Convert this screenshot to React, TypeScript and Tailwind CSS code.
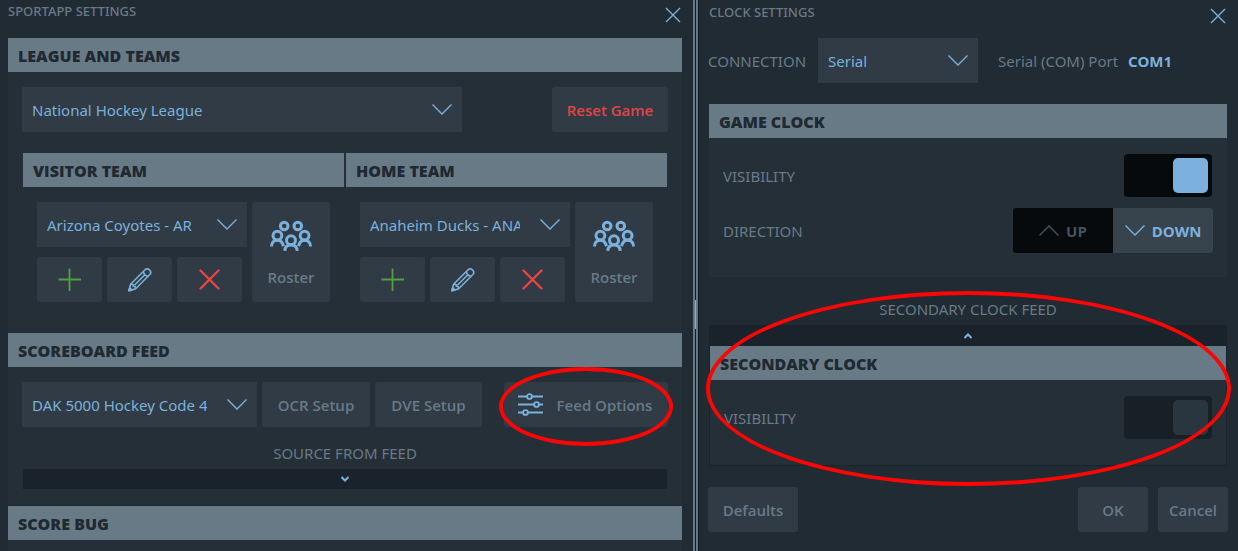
import { useState, type ReactNode } from 'react'

function ChevronIcon({ up, className = '' }: { up?: boolean; className?: string }) {
  return (
    <svg viewBox="0 0 20 11" className={`w-5 h-[11px] shrink-0 ${className}`} fill="none" stroke="currentColor" strokeWidth="1.4">
      <path d={up ? 'M0.5 10.5 L10 1 L19.5 10.5' : 'M0.5 0.5 L10 10 L19.5 0.5'} />
    </svg>
  )
}

function SmallChevron({ up }: { up?: boolean }) {
  return (
    <svg viewBox="0 0 8 6" className="w-2 h-[6px]" fill="none" stroke="#7bb1dc" strokeWidth="2">
      <path d={up ? 'M0.5 5 L4 1.5 L7.5 5' : 'M0.5 1 L4 4.5 L7.5 1'} />
    </svg>
  )
}

function PlusIcon() {
  return (
    <svg viewBox="0 0 24 24" className="w-6 h-6" stroke="#52a13f" strokeWidth="1.8">
      <path d="M11.5 0.5 V23 M0.5 11.5 H23" />
    </svg>
  )
}

function PencilIcon() {
  return (
    <svg viewBox="0 0 24 24" className="w-6 h-6" fill="none" stroke="#7bb1dc" strokeWidth="1.6" strokeLinejoin="round">
      <path d="M0.9 22.6 L2.6 16.2 L16.8 2 C18.2 0.6 20.2 0.6 21.6 2 C23 3.4 23 5.4 21.6 6.8 L7.4 21 Z" />
      <path d="M2.6 16.2 C4.8 16 5.6 16.8 5.3 18.3 C6.9 18.1 7.7 19 7.4 21 M6.4 17.2 L17.4 6.2 M15.4 3.6 C15.8 6.2 17.4 7.8 20 8.2" />
      <path d="M0.9 22.8 L1.7 19.8 L4 22 Z" fill="#7bb1dc" />
    </svg>
  )
}

function CrossIcon() {
  return (
    <svg viewBox="0 0 22 22" className="w-[22px] h-[22px]" stroke="#ea4444" strokeWidth="2.4" strokeLinecap="round">
      <path d="M1.5 1.5 L19.5 19.5 M19.5 1.5 L1.5 19.5" />
    </svg>
  )
}

function CloseIcon() {
  return (
    <svg viewBox="0 0 16 16" className="w-4 h-4" stroke="#7bb1dc" strokeWidth="1.4">
      <path d="M1 1 L15 15 M15 1 L1 15" />
    </svg>
  )
}

function RosterIcon() {
  return (
    <svg viewBox="0 0 42 31" className="w-[42px] h-[31px]" fill="none" stroke="#7bb1dc" strokeWidth="3">
      <circle cx="14.2" cy="6" r="3.8" />
      <circle cx="27.8" cy="6" r="3.8" />
      <circle cx="7.4" cy="15.6" r="4.4" />
      <circle cx="34.6" cy="15.6" r="4.4" />
      <circle cx="21" cy="20.2" r="4.5" />
      <path d="M1.5 26.4 C1.5 22.6 4 20.2 7.4 20.2 C10.2 20.2 12.6 22 13.4 26.2" />
      <path d="M40.5 26.4 C40.5 22.6 38 20.2 34.6 20.2 C31.8 20.2 29.4 22 28.6 26.2" />
      <path d="M14.8 30.8 C15 27 17.4 25 21 25 C24.6 25 27 27 27.2 30.8" />
    </svg>
  )
}

function SlidersIcon() {
  return (
    <svg viewBox="0 0 25 23" className="w-[25px] h-[23px]" fill="none" stroke="#7bb1dc" strokeWidth="1.9">
      <path d="M0 3.5 H9 M14 3.5 H25 M0 11.5 H16 M21 11.5 H25 M0 19.5 H5 M10 19.5 H25" />
      <circle cx="11.5" cy="3.5" r="2.4" />
      <circle cx="18.5" cy="11.5" r="2.4" />
      <circle cx="7.5" cy="19.5" r="2.4" />
    </svg>
  )
}

function Dropdown({ label, value, className }: { label: string; value: string; className: string }) {
  return (
    <div className={`grid items-center min-w-0 bg-[#303b45] text-[#7bb1dc] ${className}`}>
      <select
        aria-label={label}
        className="col-start-1 row-start-1 w-full min-w-0 h-[45px] pl-[10px] pr-[50px] appearance-none overflow-hidden whitespace-nowrap"
      >
        <option>{value}</option>
      </select>
      <ChevronIcon className="col-start-1 row-start-1 justify-self-end mr-[10px] pointer-events-none" />
    </div>
  )
}

function Button({ children, label, className = '' }: { children: ReactNode; label?: string; className?: string }) {
  return (
    <button
      aria-label={label}
      className={`flex items-center justify-center shrink-0 rounded-[3px] bg-[#303b45] font-['Open_Sans',sans-serif] font-semibold whitespace-nowrap ${className}`}
    >
      {children}
    </button>
  )
}

function SectionTitle({ children }: { children: ReactNode }) {
  return (
    <h2 className="h-[34px] pl-[10px] pt-[2px] flex items-center bg-[#697a87] text-[#1f2931] text-[16px] font-['Open_Sans',sans-serif] font-extrabold">
      {children}
    </h2>
  )
}

function Toggle({ id, disabled }: { id: string; disabled?: boolean }) {
  const [on, setOn] = useState(true)
  return (
    <div className={`grid items-center w-[88px] h-[43px] px-1 rounded-[4px] ${disabled ? 'bg-[#182027]' : 'bg-[#060a0d]'}`}>
      <input
        id={id}
        type="checkbox"
        checked={on}
        disabled={disabled}
        onChange={e => setOn(e.target.checked)}
        className="col-start-1 row-start-1 w-full h-full appearance-none"
      />
      <span
        className={`col-start-1 row-start-1 w-[35px] h-[35px] rounded-[5px] pointer-events-none ${on ? 'justify-self-end' : ''} ${disabled ? 'bg-[#2a363f]' : 'bg-[#7bb1dc]'}`}
      />
    </div>
  )
}

function Team({ title, team }: { title: string; team: string }) {
  return (
    <section className="min-w-0">
      <SectionTitle>{title}</SectionTitle>
      <div className="flex gap-[5px] px-[14px] pt-[15px]">
        <div className="flex-1 min-w-0">
          <Dropdown label={title} value={team} className="w-full" />
          <div className="grid grid-cols-3 gap-[5px] mt-[10px] pr-[5px]">
            <Button label="Add team" className="h-[45px]"><PlusIcon /></Button>
            <Button label="Edit team" className="h-[45px]"><PencilIcon /></Button>
            <Button label="Delete team" className="h-[45px]"><CrossIcon /></Button>
          </div>
        </div>
        <Button className="flex-col gap-4 w-[78px] h-[100px] pt-[2px]">
          <RosterIcon />
          <span>Roster</span>
        </Button>
      </div>
    </section>
  )
}

function SportAppSettings() {
  return (
    <main className="flex flex-col min-w-0 pl-2 pr-[11px]">
      <header className="flex justify-between h-[38px] pr-[1px]">
        <h1 className="pt-[1px] text-[13px] leading-5 font-medium">SPORTAPP SETTINGS</h1>
        <button aria-label="Close" className="self-start mt-[7px]"><CloseIcon /></button>
      </header>

      <SectionTitle>LEAGUE AND TEAMS</SectionTitle>
      <div className="bg-[#252f38] px-[14px] pt-[15px] pb-[30px] border-b border-[#1f2931]">
        <div className="flex justify-between gap-[90px]">
          <Dropdown label="League" value="National Hockey League" className="flex-1" />
          <Button className="w-[116px] text-[#e04545]">Reset Game</Button>
        </div>
        <div className="grid grid-cols-2 gap-[2px] mt-[21px] px-[1px]">
          <Team title="VISITOR TEAM" team="Arizona Coyotes - AR" />
          <Team title="HOME TEAM" team="Anaheim Ducks - ANA" />
        </div>
      </div>

      <SectionTitle>SCOREBOARD FEED</SectionTitle>
      <div className="bg-[#252f38] px-[14px] pt-[15px] pb-4 border-b border-[#1f2931]">
        <div className="flex gap-[5px]">
          <Dropdown label="Scoreboard feed" value="DAK 5000 Hockey Code 4" className="flex-1" />
          <Button className="w-[108px]">OCR Setup</Button>
          <Button className="w-[107px]">DVE Setup</Button>
          <div className="relative ml-[17px]">
            <Button className="w-[164px] h-[45px] gap-[14px] pr-[2px]">
              <SlidersIcon />
              Feed Options
            </Button>
            <span className="absolute -inset-x-[5px] -top-[15px] -bottom-[19px] rounded-[50%] border-4 border-[#fb0505] pointer-events-none" />
          </div>
        </div>
        <p className="mt-[14px] h-7 leading-6 text-center">SOURCE FROM FEED</p>
        <button aria-label="Show source from feed" className="flex items-center justify-center w-[calc(100%-2px)] mx-[1px] h-5 bg-[#1a222b]">
          <SmallChevron />
        </button>
      </div>

      <SectionTitle>SCORE BUG</SectionTitle>
      <div className="flex-1 bg-[#252f38]" />
    </main>
  )
}

function Divider() {
  return (
    <div className="flex justify-center border-x-2 border-[#697a87] bg-[#141b21]">
      <span className="w-px h-[29px] mt-[300px] bg-[#7bb1dc]" />
    </div>
  )
}

function ClockSettings() {
  const [direction, setDirection] = useState('down')

  return (
    <aside className="min-w-0 pl-[9px] pr-[10px] border-l border-[#141b21]">
      <header className="flex justify-between h-[38px] pl-[1px] pr-[2px]">
        <h1 className="pt-[2px] text-[13px] leading-5 font-medium">CLOCK SETTINGS</h1>
        <button aria-label="Close" className="self-start mt-2"><CloseIcon /></button>
      </header>

      <div className="flex items-center">
        <span className="w-[110px] shrink-0">CONNECTION</span>
        <Dropdown label="Connection" value="Serial" className="w-40" />
        <span className="ml-5">Serial (COM) Port</span>
        <span className="ml-[10px] font-bold text-[#7bb1dc]">COM1</span>
      </div>

      <section className="mt-[21px] mx-[1px]">
        <SectionTitle>GAME CLOCK</SectionTitle>
        <div className="bg-[#252f38] px-[14px] pt-4 pb-6">
          <div className="flex items-center justify-between pr-[1px]">
            <label htmlFor="game-visibility">VISIBILITY</label>
            <Toggle id="game-visibility" />
          </div>
          <div className="flex items-center justify-between mt-[11px]">
            <span>DIRECTION</span>
            <div className="flex w-[200px] h-[45px] rounded-[3px] overflow-hidden font-['Open_Sans',sans-serif] font-bold">
              {['up', 'down'].map(dir => (
                <button
                  key={dir}
                  aria-pressed={direction === dir}
                  onClick={() => setDirection(dir)}
                  className={`flex-1 flex items-center justify-center gap-[7px] ${direction === dir ? 'bg-[#37434d] text-[#7bb1dc]' : 'bg-[#060a0d] text-[#46545f]'}`}
                >
                  <ChevronIcon up={dir === 'up'} />
                  {dir === 'up' ? 'UP' : 'DOWN'}
                </button>
              ))}
            </div>
          </div>
        </div>
      </section>

      <section className="relative mt-5 mx-[1px]">
        <p className="h-7 leading-6 text-center">SECONDARY CLOCK FEED</p>
        <div className="bg-[#1a222b] px-[1px] pb-[1px]">
          <button aria-label="Hide secondary clock feed" className="flex items-center justify-center w-full h-[21px]">
            <SmallChevron up />
          </button>
          <SectionTitle>SECONDARY CLOCK</SectionTitle>
          <div className="flex items-center justify-between bg-[#252f38] px-[14px] pt-4 pb-[26px]">
            <label htmlFor="secondary-visibility">VISIBILITY</label>
            <Toggle id="secondary-visibility" disabled />
          </div>
        </div>
        <span className="absolute -left-[3px] -right-1 -top-[6px] -bottom-5 rounded-[50%] border-4 border-[#fb0505] pointer-events-none" />
      </section>

      <footer className="flex justify-between mt-[21px]">
        <Button className="w-[90px] h-[45px]">Defaults</Button>
        <div className="flex gap-[10px]">
          <Button className="w-[70px] h-[45px]">OK</Button>
          <Button className="w-[70px] h-[45px]">Cancel</Button>
        </div>
      </footer>
    </aside>
  )
}

export default function App() {
  return (
    <div className="grid grid-cols-[693fr_5px_540fr] min-h-screen bg-[#212b33] text-[#697a87] text-[15px] leading-5 font-['Noto_Sans',sans-serif]">
      <SportAppSettings />
      <Divider />
      <ClockSettings />
    </div>
  )
}
